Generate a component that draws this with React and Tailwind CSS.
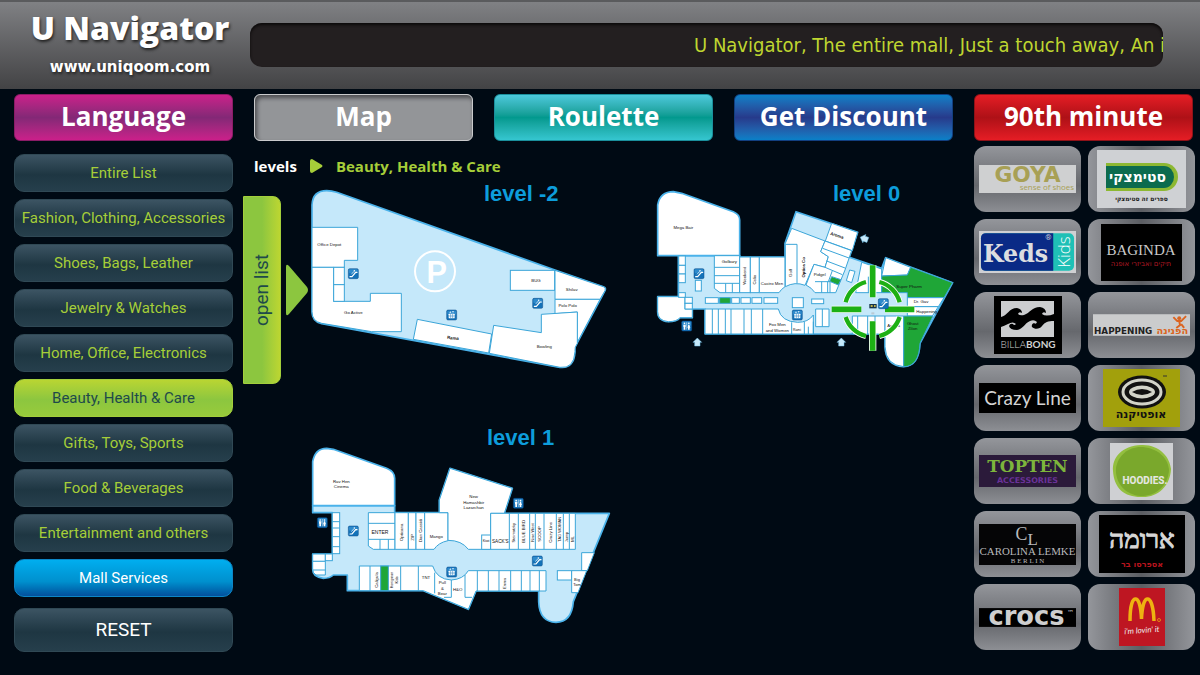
import React from "react";

const TABS = [
  { label: "Language", look: "bg-linear-to-b from-[#cb1f8a] via-[#832876] to-[#cb1f8a] border-[#8a1c66]" },
  { label: "Map", look: "bg-[#939598] border-[#c9cacc] shadow-[inset_2px_3px_4px_#4c4d50]" },
  { label: "Roulette", look: "bg-linear-to-b from-[#4cc8dc] from-0% via-[#02998e] via-50% to-[#35c6d0] border-[#1a8f9c]" },
  { label: "Get Discount", look: "bg-linear-to-b from-[#0780c8] via-[#263a8b] to-[#0780c8] border-[#123f80]" },
  { label: "90th minute", look: "bg-linear-to-b from-[#e51d25] via-[#ae1117] to-[#e51d25] border-[#8f1218]" },
];

const DARK = "bg-linear-to-b from-[#3c5463] via-[#1e3642] via-55% to-[#263f4c] text-[#a6ce39] border-[#304955]";
const CATEGORIES = [
  { label: "Entire List", look: DARK },
  { label: "Fashion, Clothing, Accessories", look: DARK },
  { label: "Shoes, Bags, Leather", look: DARK },
  { label: "Jewelry & Watches", look: DARK },
  { label: "Home, Office, Electronics", look: DARK },
  { label: "Beauty, Health & Care", look: "bg-linear-to-b from-[#b9d532] via-[#8cc63f] via-55% to-[#98cb3b] text-[#1f4a4a] border-[#a3cf3b]" },
  { label: "Gifts, Toys, Sports", look: DARK },
  { label: "Food & Beverages", look: DARK },
  { label: "Entertainment and others", look: DARK },
  { label: "Mall Services", look: "bg-linear-to-b from-[#00aeef] via-[#0090ce] via-60% to-[#04509c] text-white border-[#0c86c6]" },
];

/* ---------- map pieces ---------- */

function Shop({ d, fill = "#ffffff" }) {
  return <path d={d} fill={fill} stroke="#3ba5d8" strokeWidth="3" strokeLinejoin="round" />;
}

function Box({ x, y, w, h, fill = "#ffffff" }) {
  return <rect x={x} y={y} width={w} height={h} fill={fill} stroke="#3ba5d8" strokeWidth="3" />;
}

function Lines({ d }) {
  return <path d={d} fill="none" stroke="#3ba5d8" strokeWidth="3" />;
}

function Name({ x, y, children, up, bold, tilt, size = 13 }) {
  const angle = up ? -90 : tilt || 0;
  return (
    <text
      x={x}
      y={y}
      fontSize={size}
      fontWeight={bold ? 700 : 400}
      textAnchor="middle"
      dominantBaseline="central"
      fill="#111"
      transform={angle ? `rotate(${angle} ${x} ${y})` : undefined}
    >
      {children}
    </text>
  );
}

function Tile({ x, y, children }) {
  return (
    <g transform={`translate(${x} ${y})`}>
      <rect width="30" height="30" rx="4" fill="#1472b8" stroke="#0d4f8c" strokeWidth="1.5" />
      <rect x="2" y="2" width="26" height="12" rx="3" fill="#3f9bd8" opacity="0.6" />
      {children}
    </g>
  );
}

function Escalator({ x, y }) {
  return (
    <Tile x={x} y={y}>
      <path d="M5 24h6l11-13h4" fill="none" stroke="#fff" strokeWidth="3.5" strokeLinecap="round" />
      <path d="M9 17l8-9" stroke="#fff" strokeWidth="2" />
      <circle cx="18" cy="6" r="2.2" fill="#fff" />
    </Tile>
  );
}

function Elevator({ x, y }) {
  return (
    <Tile x={x} y={y}>
      <rect x="6" y="11" width="18" height="14" rx="2" fill="#fff" />
      <path d="M12 12v12M18 12v12M6 18h18" stroke="#1472b8" strokeWidth="1.5" />
      <path d="M8 8l3-4 3 4zM16 4h6l-3 4z" fill="#fff" />
    </Tile>
  );
}

function Restroom({ x, y }) {
  return (
    <Tile x={x} y={y}>
      <path d="M15 4v22" stroke="#fff" strokeWidth="1.5" />
      <circle cx="8.500" cy="7" r="2.500" fill="#fff" />
      <circle cx="21.500" cy="7" r="2.500" fill="#fff" />
      <path d="M5 11h7v7h-1v8H6v-8H5zM20 11h3l3 9h-2v6h-5v-6h-2z" fill="#fff" />
    </Tile>
  );
}

function Entrance({ x, y, tilt = 0 }) {
  return (
    <path
      d="M0-13L13 0H8V11H-8V0H-13Z"
      transform={`translate(${x} ${y}) rotate(${tilt})`}
      fill="#c5e8fa"
      stroke="#6fc1ea"
      strokeWidth="1.5"
    />
  );
}

const FLOOR = { fill: "#c5e8fa", stroke: "#4ab2ea", strokeWidth: 5, strokeLinejoin: "round" };

function LevelMinus2() {
  return (
    <svg viewBox="27 9 1035 570" className="col-start-1 row-start-1 w-full font-['Liberation_Sans',sans-serif]" role="img" aria-label="Map of level -2">
      <path {...FLOOR} d="M36 75Q38 32 80 32Q95 32 110 37L765 270L910 320Q919 323 915 332L828 495Q823 502 825 515Q822 567 780 562L65 431Q36 424 36 395Z" />
      <Shop d="M36 142H173V241H133V262H36Z" />
      <Shop d="M36 262H101V364H211V340H304V455H215L65 430Q36 424 36 395Z" />
      <Box x={101} y={262} w={32} h={52} />
      <Box x={101} y={314} w={32} h={50} />
      <Shop d="M352 418L575 462L566 519L340 478Z" />
      <Box x={631} y={271} w={133} h={60} />
      <Shop d="M765 271L910 320Q919 323 915 332L900 358H765Z" />
      <Shop d="M765 358H900L832 487V396L765 401Z" />
      <Shop d="M581 436L724 458V403L832 396V490Q823 502 825 515Q822 567 780 562L568 520Z" />
      <circle cx="405" cy="274" r="60" fill="none" stroke="#fff" strokeWidth="6" />
      <text x="410" y="309" fontSize="92" fontWeight="700" textAnchor="middle" fill="#fff">P</text>
      <Name x={88} y={192}>Office Depot</Name>
      <Name x={160} y={397}>Go Active</Name>
      <Name x={459} y={474} bold tilt={6}>Rama</Name>
      <Name x={733} y={498}>Bowling</Name>
      <Name x={708} y={301}>BUG</Name>
      <Name x={815} y={329}>Shilav</Name>
      <Name x={803} y={376}>Polo Polo</Name>
      <Escalator x={145} y={266} />
      <Escalator x={698} y={355} />
      <Elevator x={440} y={390} />
    </svg>
  );
}

function Target() {
  const arcs = "M602 367A84 84 0 0 1 663 306M703 306A84 84 0 0 1 764 367M764 411A84 84 0 0 1 703 468M663 468A84 84 0 0 1 602 411";
  const bars = "M683 256V352M683 424V512M560 388H649M720 388H808";
  return (
    <g fill="none">
      <path d={arcs} stroke="#fff" strokeWidth="18" />
      <path d={bars} stroke="#fff" strokeWidth="22" />
      <path d={arcs} stroke="#1db014" strokeWidth="13" />
      <path d={bars} stroke="#1db014" strokeWidth="17" />
    </g>
  );
}

function Level0() {
  return (
    <svg viewBox="27 9 930 570" className="col-start-1 row-start-1 w-full font-['Liberation_Sans',sans-serif]" role="img" aria-label="Map of level 0">
      <path {...FLOOR} d="M100 227H284V231H420V190L453 95L638 157L613 232L710 265L722 233L923 308L825 490Q822 560 775 560Q722 556 720 500V462H180V387H142V413H105Q95 425 70 425Q38 422 38 395V350H100Z" />
      <path {...FLOOR} fill="#fff" d="M38 227V75Q45 35 85 35L110 40L265 95Q284 103 284 120V227Z" />
      <Shop d="M38 350H120V387H142V413H105Q95 425 70 425Q38 422 38 395Z" />
      <Box x={101} y={228} w={20} h={28} />
      <Box x={101} y={256} w={20} h={26} />
      <Box x={101} y={282} w={20} h={26} />
      <Box x={101} y={338} w={20} h={14} />
      <Box x={120} y={352} w={22} h={18} />
      <Box x={120} y={370} w={22} h={17} />
      <Shop d="M208 227H284V338H225L208 325Z" />
      <Lines d="M208 262H284M208 287H284M208 310H284M242 310V338M262 310V338" />
      <Box x={284} y={231} w={32} h={107} />
      <Box x={316} y={231} w={27} h={107} />
      <Shop d="M343 231H420V320Q408 328 402 338H343Z" />
      <Shop d="M421 193V190L440 145L540 183L527 215L550 230L540 262L507 253L480 316Q450 304 421 320Z" />
      <Lines d="M421 193H456V310" />
      <Shop d="M560 130L638 157L622 212L541 183Z" />
      <Shop d="M540 183L620 212L600 270L572 338H510Q500 323 483 315L507 253L540 262L550 230L527 215Z" />
      <Lines d="M533 205L612 234M545 243L600 264M540 262L592 284M562 272L550 305M510 305H555V338M530 305V338M548 305V338" />
      <Shop fill="#1fa637" d="M560 290L588 299L580 315L554 304Z" />
      <Shop d="M614 270L630 274L620 308L604 302Z" />
      <Shop d="M650 247L710 267V338H632Z" />
      <Lines d="M670 290V338M688 290V338" />
      <Box x={181} y={353} w={39} h={17} />
      <Box x={224} y={353} w={32} h={17} fill="#1fa637" />
      <Box x={260} y={353} w={23} h={17} />
      <Box x={288} y={353} w={28} h={17} />
      <Box x={321} y={353} w={29} h={17} />
      <Box x={357} y={353} w={41} h={17} />
      <Box x={442} y={353} w={33} h={30} />
      <Box x={500} y={357} w={36} h={14} />
      <Box x={151} y={301} w={18} h={32} />
      <Shop d="M180 387H400Q408 425 458 427Q490 427 505 405V462H180Z" />
      <Lines d="M202 387V462M220 387V462M241 387V462M258 387V462M297 387V462M319 387V462M353 387V462M440 427V462M478 425V462" />
      <Shop d="M512 387H552V440H512Z" />
      <Lines d="M532 387V440M505 462V425M490 440V462" />
      <Shop d="M622 408H720V462H622Z" />
      <Lines d="M638 408V462M668 408V462M690 408V462" />
      <Shop d="M722 233L797 262L787 285L710 288Z" />
      <Shop fill="#1fa637" d="M797 262L923 308L897 353H787V338H710V288L787 285Z" />
      <Shop d="M787 353H897L880 380H787Z" />
      <Shop d="M787 380H880L862 408H787Z" />
      <Shop d="M720 408H776V560Q722 556 720 500Z" />
      <Shop fill="#1fa637" d="M776 408H864L825 490Q822 560 776 560Z" />
      <Name x={115} y={142}>Mega Bair</Name>
      <Name x={253} y={245}>Golbary</Name>
      <Name x={300} y={287} up>Weekend</Name>
      <Name x={330} y={299} up>Celio</Name>
      <Name x={381} y={310}>Castro Men</Name>
      <Name x={436} y={279} up>Golf</Name>
      <Name x={477} y={262} up bold>Optica Co</Name>
      <Name x={576} y={166} tilt={18} bold>Aroma</Name>
      <Name x={524} y={284}>Pidgel</Name>
      <Name x={397} y={434}>Fox Men</Name>
      <Name x={397} y={450}>and Women</Name>
      <Name x={456} y={451} size={10}>Rami</Name>
      <Name x={792} y={318}>Super Pharm</Name>
      <Name x={828} y={365}>Dr. Gav</Name>
      <Name x={845} y={394}>Happening</Name>
      <Name x={803} y={429}>Ghost</Name>
      <Name x={803} y={445}>Zilon</Name>
      <Name x={746} y={437}>Aroma</Name>
      <Escalator x={147} y={266} />
      <Restroom x={110} y={423} />
      <Elevator x={442} y={390} />
      <Entrance x={157} y={487} />
      <Entrance x={589} y={487} />
      <Entrance x={658} y={176} tilt={-70} />
      <Target />
      <rect x="673" y="372" width="22" height="13" fill="#14324a" />
      <path d="M677 378h6M687 378h5" stroke="#f4d94a" strokeWidth="4" />
      <Escalator x={700} y={356} />
      <path d="M679 397h9v6h-9z" fill="#b9c9d4" />
    </svg>
  );
}

function Level1() {
  return (
    <svg viewBox="27 21 1035 600" className="col-start-1 row-start-1 w-full font-['Liberation_Sans',sans-serif]" role="img" aria-label="Map of level 1">
      <path {...FLOOR} d="M38 257H284V278H418V240L450 145L637 205L613 280H928L820 545Q815 607 768 607Q718 605 716 545V513H528L505 568L370 512H142V465H100Q90 475 70 475Q38 472 38 448V402H97V278H38Z" />
      <path {...FLOOR} fill="#fff" d="M38 257V125Q45 85 80 85L100 88L260 145Q284 155 284 175V257Z" />
      <Box x={97} y={278} w={22} h={123} />
      <Lines d="M97 305H119M97 324H119M97 350H119M97 380H119" />
      <Box x={38} y={402} w={38} h={22} />
      <Box x={76} y={402} w={21} h={20} />
      <Shop d="M38 424H76V465H48Q38 460 38 448Z" />
      <Lines d="M38 450H76" />
      <Shop d="M205 278H285V388H220L205 378Z" />
      <Lines d="M205 310H285M205 358H285M240 358V388M265 358V388" />
      <Box x={285} y={278} w={40} h={110} />
      <Box x={325} y={278} w={23} h={110} />
      <Box x={348} y={278} w={26} h={110} />
      <Shop d="M374 278H444V362Q415 368 402 388H374Z" />
      <Shop d="M418 278V240L450 145L637 205L613 280H572V388H505Q485 361 444 361V278Z" />
      <Box x={545} y={345} w={27} h={43} />
      <Shop d="M572 280H826V388H572Z" />
      <Lines d="M628 280V388M655 280V388M689 280V388M706 280V388M732 280V388M769 280V388M790 280V388M808 280V388" />
      <Shop d="M178 438H398Q410 478 454 480Q490 478 505 452H738V513H528L505 568L370 512H178Z" />
      <Box x={242} y={438} w={23} h={74} fill="#1fa637" />
      <Lines d="M210 438V512M302 438V512M355 438V512M404 458V520M454 480V532H432M495 465V532H516M532 452V513M565 452V513M597 452V513M632 452V513M664 452V513M690 452V513M718 452V513" />
      <Shop d="M845 398H883L862 452H845Z" />
      <Box x={772} y={452} w={43} h={28} />
      <Shop d="M815 452H860L834 518H815Z" />
      <Name x={124} y={183}>Rav Hen</Name>
      <Name x={124} y={198}>Cinema</Name>
      <Name x={240} y={337} size={15}>ENTER</Name>
      <Name x={306} y={337} up>Opticana</Name>
      <Name x={337} y={352} up>ZIP</Name>
      <Name x={361} y={331} up>Dan Cassidi</Name>
      <Name x={409} y={348}>Mango</Name>
      <Name x={521} y={230}>New</Name>
      <Name x={521} y={246}>Hamashbir</Name>
      <Name x={521} y={262}>Lazarchan</Name>
      <Name x={558} y={363} size={11}>Kiwi</Name>
      <Name x={601} y={363} size={14}>SACK'S</Name>
      <Name x={641} y={338} up size={12}>Steimatzky</Name>
      <Name x={672} y={334} up>BLUE BIRD</Name>
      <Name x={698} y={338} up size={12}>Nine West</Name>
      <Name x={719} y={342} up>SCOOP</Name>
      <Name x={751} y={337} up>Crazy Line</Name>
      <Name x={780} y={328} up size={12}>TAG WOMAN</Name>
      <Name x={800} y={351} up>Jump</Name>
      <Name x={818} y={357} up>ML</Name>
      <Name x={229} y={480} up>Caligula</Name>
      <Name x={277} y={480} up size={11}>Honigman</Name>
      <Name x={291} y={480} up size={11}>Kids</Name>
      <Name x={378} y={471}>TNT</Name>
      <Name x={427} y={488}>Pull</Name>
      <Name x={427} y={504}>&amp;</Name>
      <Name x={427} y={520}>Bear</Name>
      <Name x={473} y={508}>H&amp;O</Name>
      <Name x={614} y={490} up size={11}>Emma</Name>
      <Name x={831} y={478} size={12}>Big</Name>
      <Name x={831} y={493} size={12}>Tom</Name>
      <Restroom x={52} y={293} />
      <Escalator x={145} y={318} />
      <Elevator x={440} y={441} />
      <Restroom x={640} y={235} />
      <Escalator x={697} y={408} />
    </svg>
  );
}

const TITLE = "z-10 col-start-1 row-start-1 self-start font-['Liberation_Sans',sans-serif] text-[22px] leading-[22px] font-bold text-[#0d9ddb]";

/* ---------- shop logos ---------- */

function Goya() {
  return (
    <svg viewBox="0 0 98 28" className="h-7 w-full bg-[#cfd0d1]" fill="#a8a055">
      <text x="49" y="17" textAnchor="middle" fontFamily="DejaVu Sans, sans-serif" fontSize="22" fontWeight="700">GOYA</text>
      <text x="96" y="25" textAnchor="end" fontFamily="Open Sans, sans-serif" fontSize="8">sense of shoes</text>
    </svg>
  );
}

function Steimatzky() {
  return (
    <span className="flex h-[58px] w-[89px] flex-col items-center justify-center gap-[3px] bg-[#cfd1d4] pt-2">
      <span className="flex h-7 w-[72px] items-center rounded-r-full border-y-3 border-r-4 border-[#8db832] bg-[#0c6b4e]">
        <span className="w-full pr-1 text-center font-['DejaVu_Sans',sans-serif] text-[14px] leading-5 font-bold text-white" dir="rtl">סטימצקי</span>
      </span>
      <span className="font-['DejaVu_Sans',sans-serif] text-[6px] leading-[9px] font-bold text-[#222]" dir="rtl">ספרים זה סטימצקי</span>
    </span>
  );
}

function Keds() {
  return (
    <svg viewBox="0 0 98 42" className="h-[42px] w-full bg-[#cfd0d3]">
      <rect x="2" y="2" width="94" height="38" rx="5" fill="#1fc0b6" />
      <path d="M7 2H75V40H7Q2 40 2 35V7Q2 2 7 2Z" fill="#0a2a86" />
      <text x="37" y="31" textAnchor="middle" fontFamily="DejaVu Serif, serif" fontSize="24" fontWeight="700" fill="#dcdde0">Keds</text>
      <text x="67" y="9" fontFamily="Roboto, sans-serif" fontSize="8" fill="#c4c9d8">®</text>
      <text x="92" y="21" textAnchor="middle" fontFamily="Open Sans, sans-serif" fontSize="17" fontWeight="300" fill="#fff" transform="rotate(-90 92 21)">Kids</text>
    </svg>
  );
}

function Baginda() {
  return (
    <svg viewBox="0 0 81 57" className="h-[57px] w-[81px] bg-black">
      <text x="40" y="31" textAnchor="middle" fontFamily="Liberation Serif, serif" fontSize="15" fill="#c9c9c9">BAGINDA</text>
      <text x="40" y="42" textAnchor="middle" fontFamily="DejaVu Sans, sans-serif" fontSize="7" fill="#b01824">תיקים ואביזרי אופנה</text>
    </svg>
  );
}

function Billabong() {
  return (
    <svg viewBox="0 0 68 58" className="h-[58px] w-[68px] bg-black">
      <rect x="7" y="5" width="53" height="36" fill="#cccdcf" />
      <path d="M7 21C13 20 15 12 23 12Q28 13 28 17Q25 15 24 18Q26 20 30 19C36 17 38 11 46 11Q52 12 52 17Q49 15 48 18Q52 21 60 18V25C54 25 51 26 48 30C46 33 41 34 38 31Q37 28 40 27Q42 29 43 26Q40 23 36 25C31 27 29 33 23 34Q16 34 15 30Q16 27 19 28Q20 30 22 28Q19 25 14 28Q10 30 7 31Z" />
      <text x="34" y="52" textAnchor="middle" fontFamily="Lato, sans-serif" fontSize="10" fill="#d0d0d0">
        <tspan fontWeight="300">BILLA</tspan><tspan fontWeight="700">BONG</tspan>
      </text>
    </svg>
  );
}

function Happening() {
  return (
    <svg viewBox="0 0 99 24" className="h-6 w-full">
      <rect y="1" width="99" height="22" fill="#cbcccd" />
      <text x="1" y="21" fontFamily="DejaVu Sans, sans-serif" fontSize="9" fontWeight="700" fill="#222">HAPPENING</text>
      <text x="81" y="21" textAnchor="middle" fontFamily="DejaVu Sans, sans-serif" fontSize="10" fontWeight="700" fill="#db6420">הפנינה</text>
      <path d="M82 4l4 4h4l5-5M88 8l1 5M85 15l4-3M90 11l3 4" stroke="#db6420" strokeWidth="2" fill="none" />
      <circle cx="88" cy="5" r="2" fill="#db6420" />
    </svg>
  );
}

function CrazyLine() {
  return (
    <span className="flex h-[30px] w-full items-center justify-center bg-black font-['Lato',sans-serif] text-[19px] leading-7 text-[#d4d4d4]">Crazy Line</span>
  );
}

function Opticana() {
  return (
    <svg viewBox="0 0 77 58" className="h-[58px] w-[77px] bg-[#a2a00c]">
      <ellipse cx="39" cy="23" rx="24" ry="16.500" fill="#111" />
      <ellipse cx="39" cy="23" rx="19" ry="12" fill="none" stroke="#d2d3c8" strokeWidth="3" />
      <ellipse cx="39" cy="23" rx="13" ry="6.500" fill="#d2d3c8" />
      <path d="M29 23Q39 17 49 23Q39 29 29 23Z" fill="#111" />
      <path d="M60 7h4" stroke="#333" />
      <text x="38" y="49" textAnchor="middle" fontFamily="DejaVu Sans, sans-serif" fontSize="11" fontWeight="700" fill="#111">אופטיקנה</text>
    </svg>
  );
}

function TopTen() {
  return (
    <svg viewBox="0 0 98 32" className="h-8 w-full bg-[#2b1a3a]" textAnchor="middle">
      <text x="49" y="17" fontFamily="DejaVu Serif, serif" fontSize="17" fontWeight="700" fill="#7db53c">TOPTEN</text>
      <text x="49" y="28" fontFamily="DejaVu Sans, sans-serif" fontSize="8" fontWeight="700" fill="#6a3298">ACCESSORIES</text>
    </svg>
  );
}

function Hoodies() {
  return (
    <svg viewBox="0 0 63 57" className="h-[57px] w-[63px] bg-[#cfd0d3]">
      <path d="M3 28C2 14 12 3 31 2C49 1 60 14 61 26C60 44 47 55 31 54C14 54 4 45 3 28Z" fill="#93bf3f" />
      <path d="M6 25C8 12 19 3 33 4C50 6 58 16 59 27C58 43 46 53 31 53C15 52 5 40 6 25Z" fill="#7aa82c" />
      <text x="35" y="41" textAnchor="middle" fontFamily="Roboto, sans-serif" fontSize="10" fontWeight="800" fill="#e4e6e0">HOODIES.</text>
    </svg>
  );
}

function CarolinaLemke() {
  return (
    <svg viewBox="0 0 98 41" className="h-[41px] w-full bg-[#050506]" fill="#b9b9bb" fontFamily="Liberation Serif, serif">
      <text x="37" y="16" fontSize="18">C</text>
      <text x="49" y="21" fontSize="17">L</text>
      <text x="49" y="31" textAnchor="middle" fontSize="11">CAROLINA LEMKE</text>
      <text x="49" y="39" textAnchor="middle" fontSize="7">B E R L I N</text>
    </svg>
  );
}

function Aroma() {
  return (
    <svg viewBox="0 0 86 58" className="h-[58px] w-[86px] bg-black" textAnchor="middle">
      <text x="43" y="33" fontFamily="Liberation Serif, serif" fontSize="26" fill="#d6d6d6" stroke="#d6d6d6" strokeWidth="1">ארומה</text>
      <text x="43" y="52" fontFamily="DejaVu Sans, sans-serif" fontSize="8" fontWeight="700" fill="#b8141e">אספרסו בר</text>
    </svg>
  );
}

function Crocs() {
  return (
    <svg viewBox="0 0 98 19" className="h-[19px] w-full overflow-visible">
      <rect width="98" height="19" />
      <text x="48" y="17" textAnchor="middle" fontFamily="DejaVu Sans, sans-serif" fontSize="26" fontWeight="700" fill="#cfcfcf">crocs</text>
      <text x="89" y="7" fontFamily="DejaVu Sans, sans-serif" fontSize="7" fill="#cfcfcf">™</text>
    </svg>
  );
}

function Mcdonalds() {
  return (
    <svg viewBox="0 0 46 58" className="h-[58px] w-[46px] bg-[#be1622]">
      <path d="M11 33C11 20 13 11 16.500 11C20 11 22 20 22.500 31C23 20 25 11 28.500 11C32 11 34.500 20 35 33" fill="none" stroke="#eeb211" strokeWidth="3.500" />
      <circle cx="40" cy="32" r="1.500" fill="none" stroke="#eeb211" strokeWidth="0.700" />
      <text x="23" y="45" textAnchor="middle" fontFamily="Lato, sans-serif" fontSize="8" fontStyle="italic" fill="#eee" transform="rotate(-4 23 45)">i'm lovin' it</text>
    </svg>
  );
}

const VERTICAL = "bg-linear-to-b from-[#94969b] via-[#66686d] via-60% to-[#8d8f94]";
const HORIZONTAL = "bg-linear-to-r from-[#94969b] via-[#5c5e63] to-[#94969b]";
const SHOPS = [
  { name: "Goya", Logo: Goya, look: VERTICAL },
  { name: "Steimatzky", Logo: Steimatzky, look: HORIZONTAL },
  { name: "Keds Kids", Logo: Keds, look: VERTICAL },
  { name: "Baginda", Logo: Baginda, look: HORIZONTAL },
  { name: "Billabong", Logo: Billabong, look: VERTICAL },
  { name: "Happening", Logo: Happening, look: VERTICAL },
  { name: "Crazy Line", Logo: CrazyLine, look: VERTICAL },
  { name: "Opticana", Logo: Opticana, look: HORIZONTAL },
  { name: "TopTen Accessories", Logo: TopTen, look: VERTICAL },
  { name: "Hoodies", Logo: Hoodies, look: HORIZONTAL },
  { name: "Carolina Lemke Berlin", Logo: CarolinaLemke, look: VERTICAL },
  { name: "Aroma", Logo: Aroma, look: HORIZONTAL },
  { name: "Crocs", Logo: Crocs, look: VERTICAL },
  { name: "McDonald's", Logo: Mcdonalds, look: HORIZONTAL },
];

/* ---------- page ---------- */

export default function App() {
  return (
    <div className="min-h-screen bg-[#000a14] font-['Open_Sans',sans-serif]">
      <header className="flex h-[89px] items-start border-t-2 border-[#5a5b5d] bg-linear-to-b from-[#808184] to-[#434345] pr-[37px] pl-[14px]">
        <div className="flex w-[236px] shrink-0 flex-col items-center pr-[4px] text-white [text-shadow:1px_2px_3px_#222]">
          <h1 className="pt-[5px] text-[32px] leading-[42px] font-extrabold">U Navigator</h1>
          <a href="http://www.uniqoom.com" className="pt-2 font-['DejaVu_Sans',sans-serif] text-[15px] leading-5 font-bold">www.uniqoom.com</a>
        </div>
        <div className="mt-[21px] flex h-11 min-w-0 grow items-center overflow-hidden rounded-xl bg-[#231f20] pl-[444px] shadow-[inset_0_2px_3px_#0c0a0a]">
          <p className="font-['DejaVu_Sans_Condensed','DejaVu_Sans',sans-serif] text-[20px] whitespace-nowrap text-[#bfd630]">U Navigator, The entire mall, Just a touch away, An i</p>
        </div>
      </header>

      <nav className="grid grid-cols-5 gap-[21px] pt-[5px] pr-[7px] pl-[14px]">
        {TABS.map((t) => (
          <button key={t.label} className={`h-[47px] rounded-md border pb-[3px] text-[26px] leading-8 font-bold text-white ${t.look}`}>
            {t.label}
          </button>
        ))}
      </nav>

      <main className="grid grid-cols-[219fr_721fr_221fr] gap-x-[10px] pr-[5px] pl-[14px]">
        <aside className="flex flex-col gap-[7px] pt-[13px] font-['Roboto',sans-serif] text-[15px]">
          {CATEGORIES.map((c) => (
            <button key={c.label} className={`h-[38px] rounded-[10px] border whitespace-nowrap ${c.look}`}>
              {c.label}
            </button>
          ))}
          <button className={`mt-1 h-11 rounded-[10px] border text-[19px] ${DARK}`}>
            <span className="text-white">RESET</span>
          </button>
        </aside>

        <section>
          <div className="flex items-center gap-[13px] pt-[14px] pl-[11px] text-[15px] leading-[22px] font-bold">
            <span className="text-white">levels</span>
            <svg viewBox="0 0 13 16" className="h-4 w-[13px]" aria-hidden="true">
              <path d="M2 1L12 7Q13 8 12 9L2 15Q0 15 0 13V3Q0 1 2 1Z" fill="#a6ce39" />
            </svg>
            <span className="text-[#a6ce39]">Beauty, Health &amp; Care</span>
          </div>

          <div className="flex pt-[6px]">
            <button className="mt-[13px] flex h-[188px] w-[66px] shrink-0 items-center gap-[4px]">
              <span className="flex h-full w-[38px] items-center justify-center rounded-r-lg border border-[#a3cf3b] bg-linear-to-r from-[#8cc63f] via-[#8cc63f] to-[#bcd631]">
                <span className="rotate-180 font-['Roboto',sans-serif] text-[19px] text-[#1f4a4a] [writing-mode:vertical-rl]">open list</span>
              </span>
              <svg viewBox="0 0 24 54" className="h-[54px] w-6" aria-hidden="true">
                <path d="M1 4Q1 0 4 3L22 24Q24 27 22 30L4 51Q1 54 1 50Z" fill="#8cc63f" />
              </svg>
            </button>

            <div className="grid grow grid-cols-[345fr_310fr] gap-y-[54px]">
              <div className="grid">
                <h2 className={`pl-[175px] ${TITLE}`}>level -2</h2>
                <LevelMinus2 />
              </div>
              <div className="grid">
                <h2 className={`pl-[179px] ${TITLE}`}>level 0</h2>
                <Level0 />
              </div>
              <div className="grid">
                <h2 className={`pl-[178px] ${TITLE}`}>level 1</h2>
                <Level1 />
              </div>
            </div>
          </div>
        </section>

        <aside className="grid grid-cols-2 content-start gap-[7px] pt-[5px]">
          {SHOPS.map(({ name, Logo, look }) => (
            <button key={name} aria-label={name} className={`flex h-[66px] items-center justify-center rounded-xl px-[5px] ${look}`}>
              <Logo />
            </button>
          ))}
        </aside>
      </main>
    </div>
  );
}
